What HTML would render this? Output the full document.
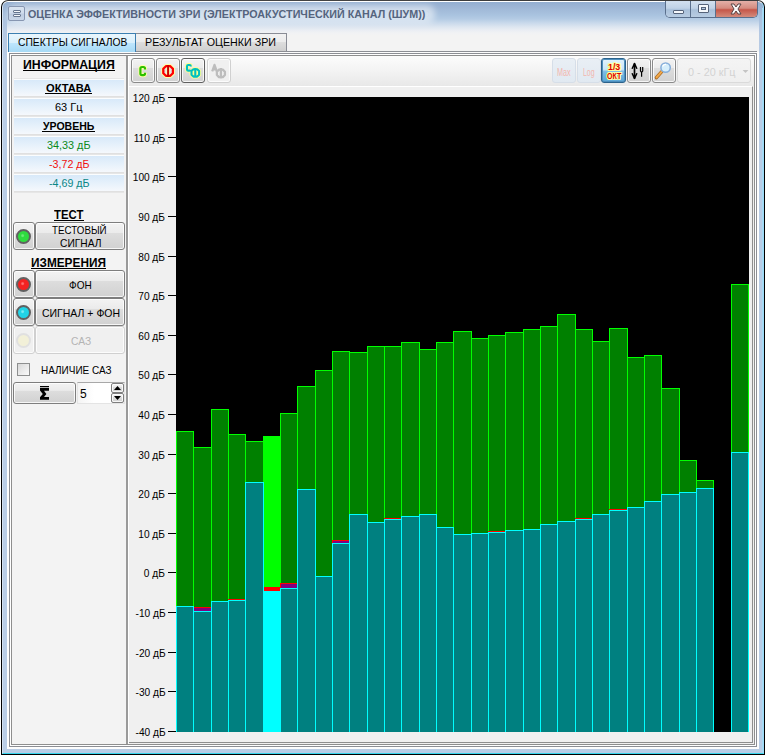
<!DOCTYPE html>
<html><head><meta charset="utf-8">
<style>
*{box-sizing:border-box;margin:0;padding:0}
html,body{width:765px;height:756px;overflow:hidden;background:#fff}
body{font-family:"Liberation Sans",sans-serif;font-size:11px;color:#000;position:relative}
.abs{position:absolute}
#win{position:absolute;left:1px;top:0;width:764px;height:755px;background:linear-gradient(to bottom,#3c3c3c 0,#3c3c3c 1px,#000 3px,#000 100%);border-radius:7px 7px 0 0}
#w2{position:absolute;left:-1px;top:0;width:765px;height:756px}
#frame{position:absolute;left:1px;top:1px;width:762px;height:753px;border-radius:6px 6px 0 0;
 background:linear-gradient(to bottom,#93aed0 0,#a9c1de 15px,#b4c8e2 30px,#b9cde6 60px,#b9cde6 100%);
 border:1px solid #fff;border-left-color:#d5e2f1;border-right-color:#9ddbf6;border-bottom-color:#37d6ee}
#title{position:absolute;left:27px;top:7px;font-size:12px;font-weight:bold;color:#5d6b84;letter-spacing:0px;white-space:nowrap}

#tabbg{position:absolute;left:7px;top:2px;width:752px;height:747px;background:linear-gradient(to bottom,#93aed0 0,#9fb7d6 6px,#a9c3df 13px,#b4cbe4 17px,#c9d9eb 21px,#dde6f0 25px,#e9edf3 28px,#f1f2f4 31px,#f3f3f3 34px,#f3f3f3 100%)}
#glow{position:absolute;left:14px;top:11px;width:415px;height:6px;background:rgba(255,255,255,.5);box-shadow:0 0 6px 6px rgba(255,255,255,.5);border-radius:3px}
#tline{position:absolute;left:136px;top:51px;width:621px;height:1px;background:#8c8e94}
#tline2{position:absolute;left:9px;top:52px;width:748px;height:1px;background:#fcfcfc}
.tab{position:absolute;height:20px;font-size:11px;text-align:center;line-height:19px;white-space:nowrap}
#tab1{left:8px;top:33px;width:128px;height:19px;border:1px solid #3c7fb1;border-bottom:none;
 background:linear-gradient(to bottom,#eaf6fd 0,#d9f0fc 50%,#bee6fd 50%,#a7d9f5 100%);line-height:20px}
#tab2{left:136px;top:33px;width:151px;height:18px;border:1px solid #898c95;border-left:none;border-bottom:none;
 background:linear-gradient(to bottom,#f2f2f2 0,#ebebeb 50%,#dddddd 50%,#cfcfcf 100%);line-height:18px}
#pane{position:absolute;left:9px;top:53px;width:748px;height:694px;background:#fff;border:1px solid #8c8e94}
#pane2{position:absolute;left:11px;top:55px;width:744px;height:690px;background:#f0f0f0;border:1px solid #8e8e8e}
#lp{position:absolute;left:12px;top:56px;width:116px;height:688px;background:#f3f3f3;border-right:2px solid #9a9a9a}
#rp{position:absolute;left:128px;top:56px;width:626px;height:688px;background:#f0f0f0;border-left:1px solid #fff}
.hd{position:absolute;left:11px;width:115px;text-align:center;font-weight:bold;text-decoration:underline;font-size:12px;white-space:nowrap}
.band{position:absolute;left:14px;width:110px;height:17px;background:linear-gradient(to bottom,#fbfdfe 0,#fbfdfe 1px,#d8e9f9 1px,#e6f1fb 9px,#f5f8fc 17px);box-shadow:0 1px 0 #e0e0e0,0 2px 0 #e6e6e6}
.band b{font-size:12px;text-decoration:underline}
.btn{position:absolute;border:1px solid #7e7e7e;border-radius:3px;background:linear-gradient(to bottom,#f3f3f3 0,#ebebeb 37%,#dddddd 40%,#d1d1d1 100%);
 box-shadow:inset 0 0 0 1px rgba(255,255,255,.8);text-align:center;font-size:11px;white-space:nowrap}
.btn.dis{border-color:#d0d0d0;background:#f0f0f0;color:#b8b8b8}
.led{position:absolute;width:15px;height:15px;border-radius:50%;border:2px solid #616161}
#chart{position:absolute;left:176px;top:97px;width:573px;height:635px;background:#000}
.tx{position:absolute;white-space:nowrap;transform-origin:0 50%;display:block}
.tm{position:absolute;left:168px;width:8px;height:1px;background:#000}
.tb{position:absolute;top:58px;width:24px;height:25px}
</style></head><body>
<div id="win"><div id="frame"></div><div id="w2">
<div class="abs" style="left:762px;top:8px;width:1px;height:745px;background:#a9d9f4"></div><div id="tabbg"></div><div id="glow"></div><div id="tline"></div><div id="tline2"></div>
<!-- title icon -->
<div class="abs" style="left:8px;top:6px;width:17px;height:15px;border:1px solid #8796b1;border-radius:2px;background:linear-gradient(#d9e3f0 0,#d0dcec 48%,#bfcee3 52%,#c9d6e8 100%)"></div>
<div class="abs" style="left:13px;top:10px;width:8px;height:3px;border:1px solid #66768f;border-radius:1px;background:#f4f7fb"></div>
<div class="abs" style="left:13px;top:14px;width:8px;height:3px;border:1px solid #66768f;border-radius:1px;background:#f4f7fb"></div>

<!-- caption buttons -->
<div class="abs" style="left:665px;top:1px;width:93px;height:17px;border:1px solid #5a6f8c;border-top:none;border-radius:0 0 5px 5px;overflow:hidden;background:#c5d5e8">
 <div class="abs" style="left:0;top:0;width:25px;height:16px;background:linear-gradient(#d3e0ef 0,#c0d2e6 45%,#a9c0da 55%,#b8cce2 100%);border-right:1px solid #5a6f8c"></div>
 <div class="abs" style="left:25px;top:0;width:25px;height:16px;background:linear-gradient(#d3e0ef 0,#c0d2e6 45%,#a9c0da 55%,#b8cce2 100%);border-right:1px solid #5a6f8c"></div>
 <div class="abs" style="left:50px;top:0;width:42px;height:16px;background:linear-gradient(#e4b0a8 0,#d58c80 45%,#c5574a 55%,#d48b7c 100%)"></div>
 <div class="abs" style="left:7px;top:9px;width:11px;height:4px;background:#f4f7fb;border:1px solid #56637a;border-radius:1px"></div>
 <div class="abs" style="left:32px;top:3px;width:11px;height:9px;border:1px solid #56637a;background:#f4f7fb;border-radius:1px"></div>
 <div class="abs" style="left:35px;top:6px;width:5px;height:3px;border:1px solid #56637a;background:#b5c8de"></div>
 <svg class="abs" style="left:63px;top:2px" width="14" height="12" viewBox="0 0 14 12"><path d="M2 1 L5 1 L7 4 L9 1 L12 1 L9 6 L12 11 L9 11 L7 8 L5 11 L2 11 L5 6 Z" fill="#f8f8f8" stroke="#5a4545" stroke-width="1"/></svg>
</div>

<div class="abs" style="left:7px;top:52px;width:2px;height:697px;background:#fdfdfd"></div><div class="abs" style="left:757px;top:52px;width:2px;height:697px;background:#fdfdfd"></div><div class="abs" style="left:7px;top:747px;width:752px;height:2px;background:#fdfdfd"></div>
<div id="pane"></div><div id="pane2"></div>
<div id="tab1" class="tab"></div>
<div id="tab2" class="tab"></div>
<div id="lp"></div><div id="rp"></div>

<!-- left panel -->

<div class="band" style="top:79px;box-shadow:0 -1px 0 #e6e6e6,0 1px 0 #e0e0e0,0 2px 0 #e6e6e6"></div>
<div class="band" style="top:98px"></div>
<div class="band" style="top:117px"></div>
<div class="band" style="top:136px"></div>
<div class="band" style="top:155px"></div>
<div class="band" style="top:174px"></div>

<div class="btn" style="left:13px;top:222px;width:22px;height:28px"></div>
<div class="led" style="left:16px;top:229px;background:radial-gradient(circle at 42% 42%,#6cec78 0,#6cec78 8%,#2fdc3f 22%,#2fdc3f 100%)"></div>
<div class="btn" style="left:35px;top:222px;width:90px;height:28px;line-height:12px;padding-top:1px"></div>

<div class="btn" style="left:13px;top:270px;width:22px;height:28px"></div>
<div class="led" style="left:16px;top:277px;background:radial-gradient(circle at 42% 42%,#ff7070 0,#ff7070 8%,#f32222 22%,#f32222 100%)"></div>
<div class="btn" style="left:35px;top:270px;width:90px;height:28px;"></div>
<div class="btn" style="left:13px;top:298px;width:22px;height:28px"></div>
<div class="led" style="left:16px;top:305px;background:radial-gradient(circle at 42% 42%,#7eeaf2 0,#7eeaf2 8%,#22d3e6 22%,#22d3e6 100%)"></div>
<div class="btn" style="left:35px;top:298px;width:90px;height:28px;"></div>
<div class="btn dis" style="left:13px;top:326px;width:22px;height:28px"></div>
<div class="led" style="left:16px;top:333px;background:#f2f0d8;border-color:#e0e0e0"></div>
<div class="btn dis" style="left:35px;top:326px;width:90px;height:28px;"></div>
<!-- checkbox -->
<div class="abs" style="left:17px;top:363px;width:13px;height:13px;border:1px solid #8e8f8f;background:linear-gradient(135deg,#d8d8d8,#fafafa)"></div>

<div class="btn" style="left:13px;top:382px;width:63px;height:22px"></div>
<svg class="abs" style="left:0;top:380px" width="130" height="30" viewBox="0 380 130 30"><path d="M40 386 H49 V387.2 H40 Z M40 388 H49 V390.8 H44 L46.4 393.9 L44 397.1 H49 V399.8 H40 V397.3 L42.8 393.9 L40 390.6 Z" fill="#000"/></svg>
<div class="abs" style="left:77px;top:382px;width:48px;height:22px;background:linear-gradient(to right,#f4f4f4 0,#fff 35%,#fff 70%,#f2f2f2 100%);border:1px solid #e4e4e4;border-top-color:#a8a8a8"></div>

<div class="btn" style="left:111px;top:383px;width:13px;height:10px;border-radius:2px"></div>
<div class="btn" style="left:111px;top:393px;width:13px;height:10px;border-radius:2px"></div>
<svg class="abs" style="left:114px;top:386px" width="7" height="4"><path d="M0 4 L3.5 0 L7 4Z" fill="#000"/></svg>
<svg class="abs" style="left:114px;top:396px" width="7" height="4"><path d="M0 0 L3.5 4 L7 0Z" fill="#000"/></svg>

<!-- toolbar -->
<div class="abs" style="left:129px;top:56px;width:625px;height:30px;background:linear-gradient(to bottom,#fcfcfc 0,#f3f3f3 50%,#e8e8e8 100%)"></div>
<div class="btn tb" style="left:131px;border-color:#8a8a8a"></div>
<div class="btn tb" style="left:156px;border-color:#8a8a8a"></div>
<div class="btn tb" style="left:181px;border-color:#5f5f5f"></div>
<div class="btn tb dis" style="left:207px"></div>
<div class="btn tb dis" style="left:552px;background:linear-gradient(#e9eff5,#e1e9f1);border-color:#d6dee8;box-shadow:none"></div>
<div class="btn tb dis" style="left:577px;background:linear-gradient(#e9eff5,#e1e9f1);border-color:#d6dee8;box-shadow:none"></div>
<div class="btn tb" style="left:601px;width:25px;border-color:#2c628b;box-shadow:inset 0 0 0 1px #4f8fbd;background:linear-gradient(#e3f3fc 0,#c8e6f7 45%,#7dbde3 55%,#5aa6d6 100%)"></div>
<div class="btn tb" style="left:627px;border-color:#8a8a8a"></div>
<div class="btn tb" style="left:652px;border-color:#8a8a8a"></div>
<div class="abs" style="left:677px;top:58px;width:74px;height:25px;border:1px solid #dadada;border-radius:3px;background:linear-gradient(#f4f4f4,#efefef)"></div>
<svg class="abs" style="left:0;top:0" width="765" height="100">
 <!-- C green -->
 <g fill="none" stroke-linejoin="round">
 <path d="M145 69.4 V68.6 Q145 67 143.4 67 H142 Q140.4 67 140.4 68.6 V73.6 Q140.4 75.2 142 75.2 H143.4 Q145 75.2 145 73.6 V72.8" stroke="#ffffa8" stroke-width="4"/>
 <path d="M145 69.4 V68.6 Q145 67 143.4 67 H142 Q140.4 67 140.4 68.6 V73.6 Q140.4 75.2 142 75.2 H143.4 Q145 75.2 145 73.6 V72.8" stroke="#2cc000" stroke-width="2.2"/>
 <!-- Ф red -->
 <path d="M165.9 66.2 H170.3 L172.9 68.8 V73.2 L170.3 75.8 H165.9 L163.3 73.2 V68.8 Z" stroke="#ffffa8" stroke-width="4.2"/>
 <path d="M165.9 66.2 H170.3 L172.9 68.8 V73.2 L170.3 75.8 H165.9 L163.3 73.2 V68.8 Z" fill="#e4e4e4" stroke="none"/>
 <path d="M168.1 64.4 V77.6" stroke="#ffffa8" stroke-width="3.6"/>
 <path d="M165.9 66.2 H170.3 L172.9 68.8 V73.2 L170.3 75.8 H165.9 L163.3 73.2 V68.8 Z" stroke="#ff0000" stroke-width="2.3"/>
 <path d="M168.1 65 V77" stroke="#cc0000" stroke-width="2"/>
 <!-- CФ teal -->
 <path d="M190.8 66.6 V66.2 Q190.8 65 189.6 65 H188.2 Q187 65 187 66.2 V69.4 Q187 70.6 188.2 70.6 H189.6 Q190.8 70.6 190.8 69.8" stroke="#ffff90" stroke-width="3.8"/>
 <path d="M193.4 69.2 H197.2 L199.1 71.1 V74.7 L197.2 76.6 H193.4 L191.5 74.7 V71.1 Z M195.3 68 V77.8" stroke="#ffff90" stroke-width="4"/>
 <path d="M190.8 66.6 V66.2 Q190.8 65 189.6 65 H188.2 Q187 65 187 66.2 V69.4 Q187 70.6 188.2 70.6 H189.6 Q190.8 70.6 190.8 69.8" stroke="#00c0c0" stroke-width="2.1"/>
 <path d="M193.4 69.2 H197.2 L199.1 71.1 V74.7 L197.2 76.6 H193.4 L191.5 74.7 V71.1 Z M195.3 68 V77.8" stroke="#00c0c0" stroke-width="2.1"/>
 <!-- AФ disabled -->
 <path d="M212.2 71.4 L214.5 64.8 L216.8 71.4 M213 69.4 H216" stroke="#bdbdbd" stroke-width="2.2"/>
 <path d="M219 69.6 H222.8 L224.9 71.7 V75 L222.8 77.1 H219 L216.9 75 V71.7 Z M220.9 68 V78.4" stroke="#bdbdbd" stroke-width="2.3"/>
 </g>
 <!-- 1/3 OKT -->
 <!-- arrows -->
 <g fill="none" stroke="#000">
 <path d="M634.5 63.4 V78.6" stroke-width="1.7"/>
 <path d="M634.5 63.6 L632.3 68.2 M634.5 63.6 L636.7 68.2 M634.5 78.4 L632.3 73.8 M634.5 78.4 L636.7 73.8" stroke-width="1.5" stroke-linecap="round"/>
 <path d="M633.2 66 H635.8 M633.2 76 H635.8" stroke-width="1.6"/>
 <path d="M640.5 66.9 V71 L641.6 72.4 V76.7 M642.7 66.9 V71 L641.6 72.4" stroke-width="1.2"/>
 </g>
 <!-- magnifier -->
 <path d="M661.5 71.8 L656.4 77.6" stroke="#a86820" stroke-width="3.4" stroke-linecap="round"/>
 <path d="M661.5 71.8 L656.6 77.4" stroke="#f2a848" stroke-width="2" stroke-linecap="round"/>
 <circle cx="665.6" cy="67.6" r="4.7" fill="#d6eefb" stroke="#86aeda" stroke-width="1.5"/>
 <path d="M662.6 66.5 A3.2 3.2 0 0 1 666 64.4" stroke="#fff" stroke-width="1.2" fill="none"/>
 <path d="M742.6 70 H748.4 L745.5 73 Z" fill="#c4c4c4"/>
</svg>
<!-- chart -->
<div class="abs" style="left:129px;top:86px;width:624px;height:657px;background:#f0f0f0;border-top:1px solid #fff;border-right:1px solid #8e8e8e;border-bottom:1px solid #8e8e8e"></div>
<span id="t_ax0" class="tx" style="right:599.8px;top:93.29px;font-size:11px;line-height:11px;transform-origin:100% 50%;transform:scaleX(0.9216);">120 дБ</span><div class="tm" style="top:97px"></div>
<span id="t_ax1" class="tx" style="right:599.8px;top:133.29px;font-size:11px;line-height:11px;transform-origin:100% 50%;transform:scaleX(0.9216);">110 дБ</span><div class="tm" style="top:137px"></div>
<span id="t_ax2" class="tx" style="right:599.8px;top:172.29px;font-size:11px;line-height:11px;transform-origin:100% 50%;transform:scaleX(0.9216);">100 дБ</span><div class="tm" style="top:176px"></div>
<span id="t_ax3" class="tx" style="right:599.8px;top:212.29px;font-size:11px;line-height:11px;transform-origin:100% 50%;transform:scaleX(0.9216);">90 дБ</span><div class="tm" style="top:216px"></div>
<span id="t_ax4" class="tx" style="right:599.8px;top:252.29px;font-size:11px;line-height:11px;transform-origin:100% 50%;transform:scaleX(0.9216);">80 дБ</span><div class="tm" style="top:256px"></div>
<span id="t_ax5" class="tx" style="right:599.8px;top:291.29px;font-size:11px;line-height:11px;transform-origin:100% 50%;transform:scaleX(0.9216);">70 дБ</span><div class="tm" style="top:295px"></div>
<span id="t_ax6" class="tx" style="right:599.8px;top:331.29px;font-size:11px;line-height:11px;transform-origin:100% 50%;transform:scaleX(0.9216);">60 дБ</span><div class="tm" style="top:335px"></div>
<span id="t_ax7" class="tx" style="right:599.8px;top:370.29px;font-size:11px;line-height:11px;transform-origin:100% 50%;transform:scaleX(0.9216);">50 дБ</span><div class="tm" style="top:374px"></div>
<span id="t_ax8" class="tx" style="right:599.8px;top:410.29px;font-size:11px;line-height:11px;transform-origin:100% 50%;transform:scaleX(0.9216);">40 дБ</span><div class="tm" style="top:414px"></div>
<span id="t_ax9" class="tx" style="right:599.8px;top:450.29px;font-size:11px;line-height:11px;transform-origin:100% 50%;transform:scaleX(0.9216);">30 дБ</span><div class="tm" style="top:454px"></div>
<span id="t_ax10" class="tx" style="right:599.8px;top:489.29px;font-size:11px;line-height:11px;transform-origin:100% 50%;transform:scaleX(0.9216);">20 дБ</span><div class="tm" style="top:493px"></div>
<span id="t_ax11" class="tx" style="right:599.8px;top:529.29px;font-size:11px;line-height:11px;transform-origin:100% 50%;transform:scaleX(0.9216);">10 дБ</span><div class="tm" style="top:533px"></div>
<span id="t_ax12" class="tx" style="right:599.8px;top:568.29px;font-size:11px;line-height:11px;transform-origin:100% 50%;transform:scaleX(0.9216);">0 дБ</span><div class="tm" style="top:572px"></div>
<span id="t_ax13" class="tx" style="right:599.8px;top:608.29px;font-size:11px;line-height:11px;transform-origin:100% 50%;transform:scaleX(0.9216);">-10 дБ</span><div class="tm" style="top:612px"></div>
<span id="t_ax14" class="tx" style="right:599.8px;top:648.29px;font-size:11px;line-height:11px;transform-origin:100% 50%;transform:scaleX(0.9216);">-20 дБ</span><div class="tm" style="top:652px"></div>
<span id="t_ax15" class="tx" style="right:599.8px;top:687.29px;font-size:11px;line-height:11px;transform-origin:100% 50%;transform:scaleX(0.9216);">-30 дБ</span><div class="tm" style="top:691px"></div>
<span id="t_ax16" class="tx" style="right:599.8px;top:727.29px;font-size:11px;line-height:11px;transform-origin:100% 50%;transform:scaleX(0.9216);">-40 дБ</span><div class="tm" style="top:731px"></div>
<div id="chart"></div>
<svg class="abs" style="left:0;top:0" width="765" height="756" shape-rendering="crispEdges">
<rect x="176.5" y="431.5" width="17" height="301" fill="#008000" stroke="#00ff00"/>
<rect x="193.5" y="447.5" width="18" height="285" fill="#008000" stroke="#00ff00"/>
<rect x="211.5" y="409.5" width="17" height="323" fill="#008000" stroke="#00ff00"/>
<rect x="228.5" y="434.5" width="17" height="298" fill="#008000" stroke="#00ff00"/>
<rect x="245.5" y="441.5" width="18" height="291" fill="#008000" stroke="#00ff00"/>
<rect x="263.5" y="436.5" width="17" height="296" fill="#00ff00" stroke="#00ff00"/>
<rect x="280.5" y="413.5" width="17" height="319" fill="#008000" stroke="#00ff00"/>
<rect x="297.5" y="386.5" width="18" height="346" fill="#008000" stroke="#00ff00"/>
<rect x="315.5" y="370.5" width="17" height="362" fill="#008000" stroke="#00ff00"/>
<rect x="332.5" y="351.5" width="17" height="381" fill="#008000" stroke="#00ff00"/>
<rect x="349.5" y="352.5" width="18" height="380" fill="#008000" stroke="#00ff00"/>
<rect x="367.5" y="346.5" width="17" height="386" fill="#008000" stroke="#00ff00"/>
<rect x="384.5" y="346.5" width="17" height="386" fill="#008000" stroke="#00ff00"/>
<rect x="401.5" y="342.5" width="18" height="390" fill="#008000" stroke="#00ff00"/>
<rect x="419.5" y="349.5" width="17" height="383" fill="#008000" stroke="#00ff00"/>
<rect x="436.5" y="342.5" width="17" height="390" fill="#008000" stroke="#00ff00"/>
<rect x="453.5" y="331.5" width="18" height="401" fill="#008000" stroke="#00ff00"/>
<rect x="471.5" y="338.5" width="17" height="394" fill="#008000" stroke="#00ff00"/>
<rect x="488.5" y="335.5" width="17" height="397" fill="#008000" stroke="#00ff00"/>
<rect x="505.5" y="332.5" width="18" height="400" fill="#008000" stroke="#00ff00"/>
<rect x="523.5" y="329.5" width="17" height="403" fill="#008000" stroke="#00ff00"/>
<rect x="540.5" y="326.5" width="17" height="406" fill="#008000" stroke="#00ff00"/>
<rect x="557.5" y="314.5" width="18" height="418" fill="#008000" stroke="#00ff00"/>
<rect x="575.5" y="329.5" width="17" height="403" fill="#008000" stroke="#00ff00"/>
<rect x="592.5" y="341.5" width="17" height="391" fill="#008000" stroke="#00ff00"/>
<rect x="609.5" y="328.5" width="18" height="404" fill="#008000" stroke="#00ff00"/>
<rect x="627.5" y="357.5" width="17" height="375" fill="#008000" stroke="#00ff00"/>
<rect x="644.5" y="355.5" width="17" height="377" fill="#008000" stroke="#00ff00"/>
<rect x="661.5" y="388.5" width="18" height="344" fill="#008000" stroke="#00ff00"/>
<rect x="679.5" y="460.5" width="17" height="272" fill="#008000" stroke="#00ff00"/>
<rect x="696.5" y="480.5" width="17" height="252" fill="#008000" stroke="#00ff00"/>
<rect x="731.5" y="284.5" width="17" height="448" fill="#008000" stroke="#00ff00"/>
<rect x="193.5" y="607.5" width="18" height="125" fill="#800080" stroke="#ff0000"/>
<rect x="228.5" y="599.5" width="17" height="133" fill="#800080" stroke="#ff0000"/>
<rect x="263.5" y="587.5" width="17" height="145" fill="#ff0000" stroke="#ff0000"/>
<rect x="280.5" y="583.5" width="17" height="149" fill="#800080" stroke="#ff0000"/>
<rect x="332.5" y="540.5" width="17" height="192" fill="#800080" stroke="#ff0000"/>
<rect x="384.5" y="518.5" width="17" height="214" fill="#800080" stroke="#ff0000"/>
<rect x="488.5" y="531.5" width="17" height="201" fill="#800080" stroke="#ff0000"/>
<rect x="575.5" y="518.5" width="17" height="214" fill="#800080" stroke="#ff0000"/>
<rect x="609.5" y="509.5" width="18" height="223" fill="#800080" stroke="#ff0000"/>
<rect x="176.5" y="606.5" width="17" height="126" fill="#008080" stroke="#00ffff"/>
<rect x="193.5" y="611.5" width="18" height="121" fill="#008080" stroke="#00ffff"/>
<rect x="211.5" y="601.5" width="17" height="131" fill="#008080" stroke="#00ffff"/>
<rect x="228.5" y="600.5" width="17" height="132" fill="#008080" stroke="#00ffff"/>
<rect x="245.5" y="482.5" width="18" height="250" fill="#008080" stroke="#00ffff"/>
<rect x="263.5" y="591.5" width="17" height="141" fill="#00ffff" stroke="#00ffff"/>
<rect x="280.5" y="588.5" width="17" height="144" fill="#008080" stroke="#00ffff"/>
<rect x="297.5" y="489.5" width="18" height="243" fill="#008080" stroke="#00ffff"/>
<rect x="315.5" y="576.5" width="17" height="156" fill="#008080" stroke="#00ffff"/>
<rect x="332.5" y="543.5" width="17" height="189" fill="#008080" stroke="#00ffff"/>
<rect x="349.5" y="514.5" width="18" height="218" fill="#008080" stroke="#00ffff"/>
<rect x="367.5" y="522.5" width="17" height="210" fill="#008080" stroke="#00ffff"/>
<rect x="384.5" y="519.5" width="17" height="213" fill="#008080" stroke="#00ffff"/>
<rect x="401.5" y="516.5" width="18" height="216" fill="#008080" stroke="#00ffff"/>
<rect x="419.5" y="514.5" width="17" height="218" fill="#008080" stroke="#00ffff"/>
<rect x="436.5" y="527.5" width="17" height="205" fill="#008080" stroke="#00ffff"/>
<rect x="453.5" y="534.5" width="18" height="198" fill="#008080" stroke="#00ffff"/>
<rect x="471.5" y="533.5" width="17" height="199" fill="#008080" stroke="#00ffff"/>
<rect x="488.5" y="532.5" width="17" height="200" fill="#008080" stroke="#00ffff"/>
<rect x="505.5" y="530.5" width="18" height="202" fill="#008080" stroke="#00ffff"/>
<rect x="523.5" y="529.5" width="17" height="203" fill="#008080" stroke="#00ffff"/>
<rect x="540.5" y="524.5" width="17" height="208" fill="#008080" stroke="#00ffff"/>
<rect x="557.5" y="521.5" width="18" height="211" fill="#008080" stroke="#00ffff"/>
<rect x="575.5" y="519.5" width="17" height="213" fill="#008080" stroke="#00ffff"/>
<rect x="592.5" y="514.5" width="17" height="218" fill="#008080" stroke="#00ffff"/>
<rect x="609.5" y="510.5" width="18" height="222" fill="#008080" stroke="#00ffff"/>
<rect x="627.5" y="507.5" width="17" height="225" fill="#008080" stroke="#00ffff"/>
<rect x="644.5" y="501.5" width="17" height="231" fill="#008080" stroke="#00ffff"/>
<rect x="661.5" y="494.5" width="18" height="238" fill="#008080" stroke="#00ffff"/>
<rect x="679.5" y="492.5" width="17" height="240" fill="#008080" stroke="#00ffff"/>
<rect x="696.5" y="488.5" width="17" height="244" fill="#008080" stroke="#00ffff"/>
<rect x="731.5" y="452.5" width="17" height="280" fill="#008080" stroke="#00ffff"/>
</svg>
<div class="abs" style="left:176px;top:732px;width:576px;height:10px;background:#f0f0f0"></div>
<div class="abs" style="left:749px;top:87px;width:3px;height:655px;background:#f0f0f0"></div>
<span id="t_title" class="tx" style="left:28.0px;top:8.69px;font-size:11px;line-height:11px;color:#55647e;font-weight:bold;transform:scaleX(0.9754);">ОЦЕНКА ЭФФЕКТИВНОСТИ ЗРИ (ЭЛЕКТРОАКУСТИЧЕСКИЙ КАНАЛ (ШУМ))</span>
<span id="t_tab1" class="tx" style="left:17.7px;top:36.69px;font-size:11px;line-height:11px;color:#000;transform:scaleX(0.9359);">СПЕКТРЫ СИГНАЛОВ</span>
<span id="t_tab2" class="tx" style="left:145.3px;top:36.69px;font-size:11px;line-height:11px;color:#000;transform:scaleX(0.9722);">РЕЗУЛЬТАТ ОЦЕНКИ ЗРИ</span>
<span id="t_info" class="tx" style="left:23.0px;top:58.50px;font-size:12.4px;line-height:12.4px;color:#000;font-weight:bold;transform:scaleX(0.9944);">ИНФОРМАЦИЯ</span><div class="abs" style="left:22.5px;top:70px;width:92.8px;height:1px;background:#000"></div>
<span id="t_okt" class="tx" style="left:45.8px;top:82.89px;font-size:11px;line-height:11px;color:#000;font-weight:bold;transform:scaleX(1.0121);">ОКТАВА</span><div class="abs" style="left:45.3px;top:93px;width:46.4px;height:1px;background:#000"></div>
<span id="t_hz" class="tx" style="left:54.7px;top:102.29px;font-size:11px;line-height:11px;color:#000;transform:scaleX(0.9977);">63 Гц</span>
<span id="t_lvl" class="tx" style="left:42.9px;top:120.89px;font-size:11px;line-height:11px;color:#000;font-weight:bold;transform:scaleX(0.9566);">УРОВЕНЬ</span><div class="abs" style="left:42.4px;top:131px;width:52.4px;height:1px;background:#000"></div>
<span id="t_v1" class="tx" style="left:47.1px;top:140.29px;font-size:11px;line-height:11px;color:#0a8a1a;transform:scaleX(0.9834);">34,33 дБ</span>
<span id="t_v2" class="tx" style="left:48.7px;top:159.29px;font-size:11px;line-height:11px;color:#f01010;transform:scaleX(0.9721);">-3,72 дБ</span>
<span id="t_v3" class="tx" style="left:48.7px;top:178.29px;font-size:11px;line-height:11px;color:#0a8686;transform:scaleX(0.9721);">-4,69 дБ</span>
<span id="t_test" class="tx" style="left:54.0px;top:208.50px;font-size:12.4px;line-height:12.4px;color:#000;font-weight:bold;transform:scaleX(0.9143);">ТЕСТ</span><div class="abs" style="left:53.5px;top:220px;width:30.3px;height:1px;background:#000"></div>
<span id="t_tb1" class="tx" style="left:52.0px;top:224.69px;font-size:11px;line-height:11px;color:#000;transform:scaleX(0.8892);">ТЕСТОВЫЙ</span>
<span id="t_tb2" class="tx" style="left:59.5px;top:237.69px;font-size:11px;line-height:11px;color:#000;transform:scaleX(0.9290);">СИГНАЛ</span>
<span id="t_izm" class="tx" style="left:31.0px;top:256.50px;font-size:12.4px;line-height:12.4px;color:#000;font-weight:bold;transform:scaleX(0.9536);">ИЗМЕРЕНИЯ</span><div class="abs" style="left:30.5px;top:268px;width:75.9px;height:1px;background:#000"></div>
<span id="t_fon" class="tx" style="left:68.6px;top:280.49px;font-size:11px;line-height:11px;color:#000;transform:scaleX(0.9126);">ФОН</span>
<span id="t_sf" class="tx" style="left:41.5px;top:307.69px;font-size:11px;line-height:11px;color:#000;transform:scaleX(0.9530);">СИГНАЛ + ФОН</span>
<span id="t_saz" class="tx" style="left:70.5px;top:336.49px;font-size:11px;line-height:11px;color:#b4b4b4;transform:scaleX(0.9322);">САЗ</span>
<span id="t_nal" class="tx" style="left:40.7px;top:365.49px;font-size:11px;line-height:11px;color:#000;transform:scaleX(0.9069);">НАЛИЧИЕ САЗ</span>
<span id="t_five" class="tx" style="left:80.0px;top:388.44px;font-size:12px;line-height:12px;color:#000;">5</span>
<span id="t_khz" class="tx" style="left:687.6px;top:66.89px;font-size:11px;line-height:11px;color:#d3d3d3;transform:scaleX(0.9862);">0 - 20 кГц</span>
<span id="t_max" class="tx" style="left:556.8px;top:66.69px;font-size:11px;line-height:11px;color:#f3b6ae;transform:scaleX(0.6544);">Max</span>
<span id="t_log" class="tx" style="left:582.6px;top:66.69px;font-size:11px;line-height:11px;color:#f3b6ae;transform:scaleX(0.6318);">Log</span>
<span id="t_o13" class="tx" style="left:607.9px;top:63.40px;font-size:8.5px;line-height:8.5px;color:#e00000;font-weight:bold;text-shadow:1px 0 0 #ffff9a,-1px 0 0 #ffff9a,0 1px 0 #ffff9a,0 -1px 0 #ffff9a,1px 1px 0 #ffffb0,-1px -1px 0 #ffffb0,1px -1px 0 #ffffb0,-1px 1px 0 #ffffb0;transform:scaleX(1.0399);">1/3</span>
<span id="t_okt2" class="tx" style="left:606.9px;top:70.96px;font-size:9.5px;line-height:9.5px;color:#e00000;font-weight:bold;text-shadow:1px 0 0 #ffff9a,-1px 0 0 #ffff9a,0 1px 0 #ffff9a,0 -1px 0 #ffff9a,1px 1px 0 #ffffb0,-1px -1px 0 #ffffb0,1px -1px 0 #ffffb0,-1px 1px 0 #ffffb0;transform:scaleX(0.7435);">ОКТ</span>
</div></div>
</body></html>
